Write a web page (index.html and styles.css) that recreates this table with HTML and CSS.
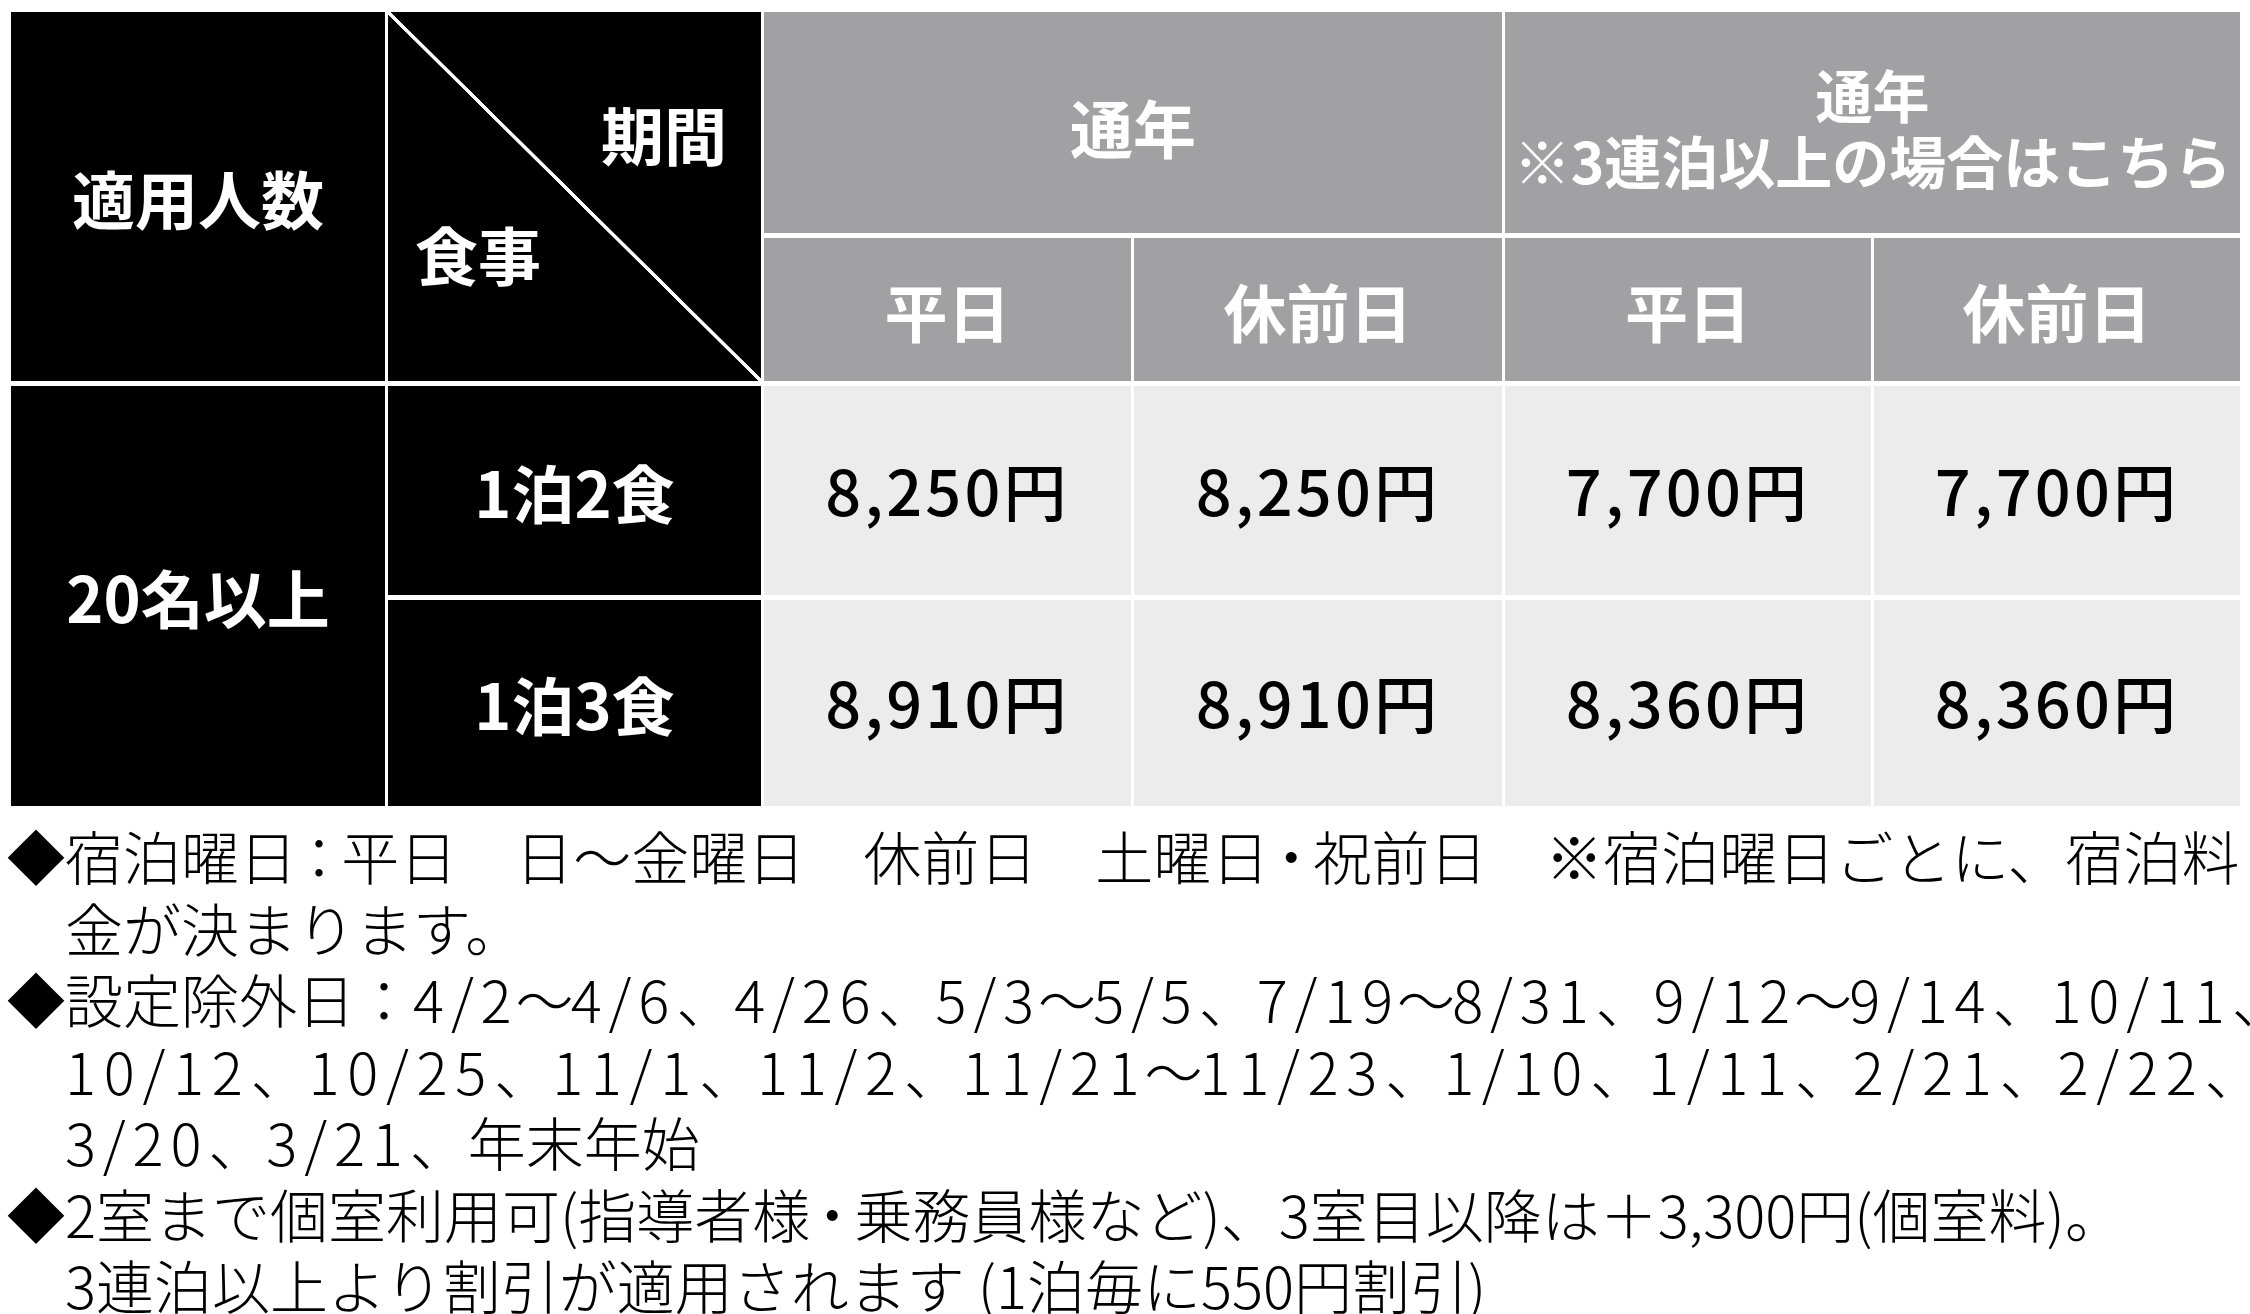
FILE: index.html
```html
<!DOCTYPE html>
<html lang="ja">
<head>
<meta charset="utf-8">
<title>宿泊料金</title>
<link rel="stylesheet" href="styles.css">
</head>
<body>
<div class="page">
  <div class="rates">
    <div class="cell dark span-rows">適用人数</div>
    <div class="cell dark span-rows diag">
      <span class="diag-period">期間</span>
      <span class="diag-meal">食事</span>
    </div>
    <div class="cell grey span-cols year">通年</div>
    <div class="cell grey span-cols year-note">通年<br>※3連泊以上の場合はこちら</div>
    <div class="cell grey">平日</div>
    <div class="cell grey">休前日</div>
    <div class="cell grey">平日</div>
    <div class="cell grey">休前日</div>

    <div class="cell dark span-rows">20名以上</div>
    <div class="cell dark">1泊2食</div>
    <div class="cell light">8,250円</div>
    <div class="cell light">8,250円</div>
    <div class="cell light">7,700円</div>
    <div class="cell light">7,700円</div>

    <div class="cell dark">1泊3食</div>
    <div class="cell light">8,910円</div>
    <div class="cell light">8,910円</div>
    <div class="cell light">8,360円</div>
    <div class="cell light">8,360円</div>
  </div>

  <ul class="notes">
    <li><span class="mark">◆</span><p>宿泊曜日<span class="narrow">：</span>平日　日〜金曜日　休前日　土曜日<span class="narrow">・</span>祝前日　※宿泊曜日ごとに、宿泊<span class="end">料</span><br>金が決まります。</p></li>
    <li><span class="mark">◆</span><p>設定除外日：<span class="n">4/2</span><span class="t">〜</span><span class="n">4/6</span>、<span class="n">4/26</span>、<span class="n">5/3</span><span class="t">〜</span><span class="n">5/5</span>、<span class="n">7/19</span><span class="t">〜</span><span class="n">8/31</span>、<span class="n">9/12</span><span class="t">〜</span><span class="n">9/14</span>、<span class="n">10/11</span><span class="end">、</span><br><span class="n wide">10/12</span>、<span class="n wide">10/25</span>、<span class="n wide">11/1</span>、<span class="n wide">11/2</span>、<span class="n wide">11/21</span><span class="t">〜</span><span class="n wide">11/23</span>、<span class="n wide">1/10</span>、<span class="n wide">1/11</span>、<span class="n wide">2/21</span>、<span class="n wide">2/22</span><span class="end">、</span><br><span class="n">3/20</span>、<span class="n">3/21</span>、年末年始</p></li>
    <li><span class="mark">◆</span><p>2室まで個室利用可(指導者様<span class="narrow">・</span>乗務員様など)、3室目以降は＋3,300円(個室料)。<br>3連泊以上より割引が適用されます (1泊毎に550円割引)</p></li>
  </ul>
</div>
</body>
</html>
```

FILE: styles.css
```css
html, body {
  margin: 0;
  padding: 0;
  background: #ffffff;
}

body {
  font-family: "Noto Sans CJK JP", "Noto Sans", sans-serif;
  color: #000;
}

.page {
  padding: 12px 10px 0 7px;
}

.rates {
  display: grid;
  grid-template-columns: 374px 373px 367px 368px 366px 366px;
  grid-template-rows: 221px 143px 209px 206px;
  column-gap: 3px;
  row-gap: 5px;
  margin-left: 4px;
  width: 2229px;
}

.cell {
  display: flex;
  align-items: center;
  justify-content: center;
  text-align: center;
  font-size: 63px;
  line-height: 1.1;
  font-weight: 700;
}

.dark {
  background: #000;
  color: #fff;
}

.grey {
  background: #a1a1a3;
  color: #fff;
}

.light {
  background: #ececec;
  color: #000;
  font-weight: 500;
  letter-spacing: 0.05em;
  padding-bottom: 4px;
}

.span-rows {
  grid-row: span 2;
}

.span-cols {
  grid-column: span 2;
}

.year {
  padding-top: 6px;
}

.year-note {
  font-size: 57px;
  line-height: 66px;
  padding-top: 6px;
}

.diag {
  flex-direction: column;
  align-items: stretch;
  justify-content: flex-start;
  background:
    linear-gradient(to top right,
      transparent calc(50% - 2px),
      #fff calc(50% - 1.5px),
      #fff calc(50% + 1.5px),
      transparent calc(50% + 2px)),
    #000;
}

.diag-period {
  text-align: right;
  padding: 86px 34px 0 0;
}

.diag-meal {
  text-align: left;
  padding: 51px 0 0 27px;
}

.notes {
  list-style: none;
  margin: 14px 0 0 0;
  padding: 0;
  font-size: 58px;
  line-height: 71.5px;
  font-weight: 300;
}

.notes li {
  display: flex;
  align-items: flex-start;
}

.mark {
  flex: 0 0 auto;
  width: 58px;
  font-weight: 400;
}

.notes p {
  margin: 0;
  white-space: nowrap;
}

.narrow {
  margin: 0 -0.12em;
}

.n {
  letter-spacing: 0.118em;
}

.n.wide {
  letter-spacing: 0.133em;
}

.t {
  margin: 0 -0.05em;
}

.end {
  display: inline-block;
  width: 0.5em;
  overflow: visible;
}
```
